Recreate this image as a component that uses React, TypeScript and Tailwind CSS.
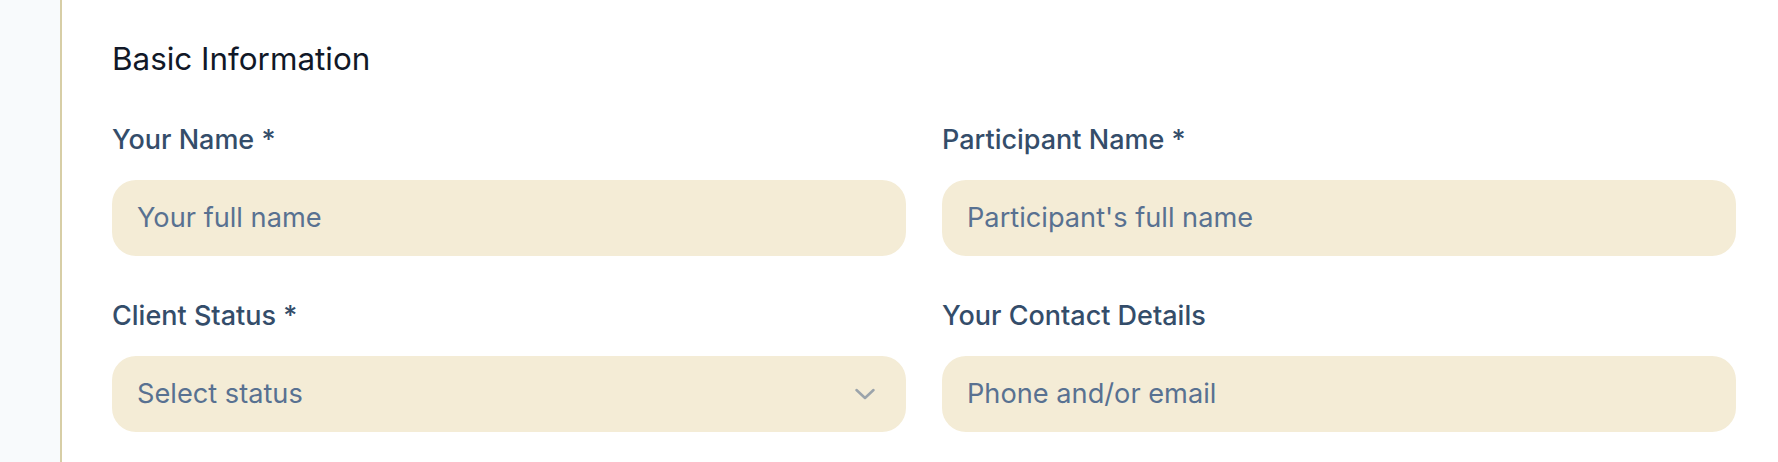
import React from "react";

function Field({ label, placeholder, select }: { label: string; placeholder: string; select?: boolean }) {
  return (
    <div className="flex flex-col">
      <label className="text-[27px] leading-[36px] font-medium text-[#344d6a] pt-[1px] mb-[22px]">{label}</label>
      <div className="h-[76px] rounded-[24px] bg-[#f4ecd6] flex items-center pl-[25px] pr-[31px]">
        <span className="flex-1 text-[27.2px] leading-[32px] text-[#587191]">{placeholder}</span>
        {select && (
          <svg width="20" height="12" viewBox="0 0 20 12" fill="none" className="shrink-0">
            <polyline points="1.5,2 10,10 18.5,2" stroke="#9ba4ab" strokeWidth="2.5" strokeLinecap="round" strokeLinejoin="round" />
          </svg>
        )}
      </div>
    </div>
  );
}

export default function App() {
  return (
    <div className="flex w-[1778px] h-[462px] bg-white overflow-hidden" style={{ fontFamily: "Inter, 'Noto Sans', sans-serif" }}>
      <div className="w-[62px] shrink-0 bg-[#f8fafc] border-r-2 border-[#d7cea6]" />
      <div className="flex-1 pl-[50px] pr-[42px] pt-[39px]">
        <h2 className="text-[31.4px] leading-[40px] font-normal text-[#111827] mb-[42px]">Basic Information</h2>
        <div className="grid grid-cols-2 gap-x-[36px] gap-y-[41px]">
          <Field label="Your Name *" placeholder="Your full name" />
          <Field label="Participant Name *" placeholder="Participant's full name" />
          <Field label="Client Status *" placeholder="Select status" select />
          <Field label="Your Contact Details" placeholder="Phone and/or email" />
        </div>
      </div>
    </div>
  );
}
